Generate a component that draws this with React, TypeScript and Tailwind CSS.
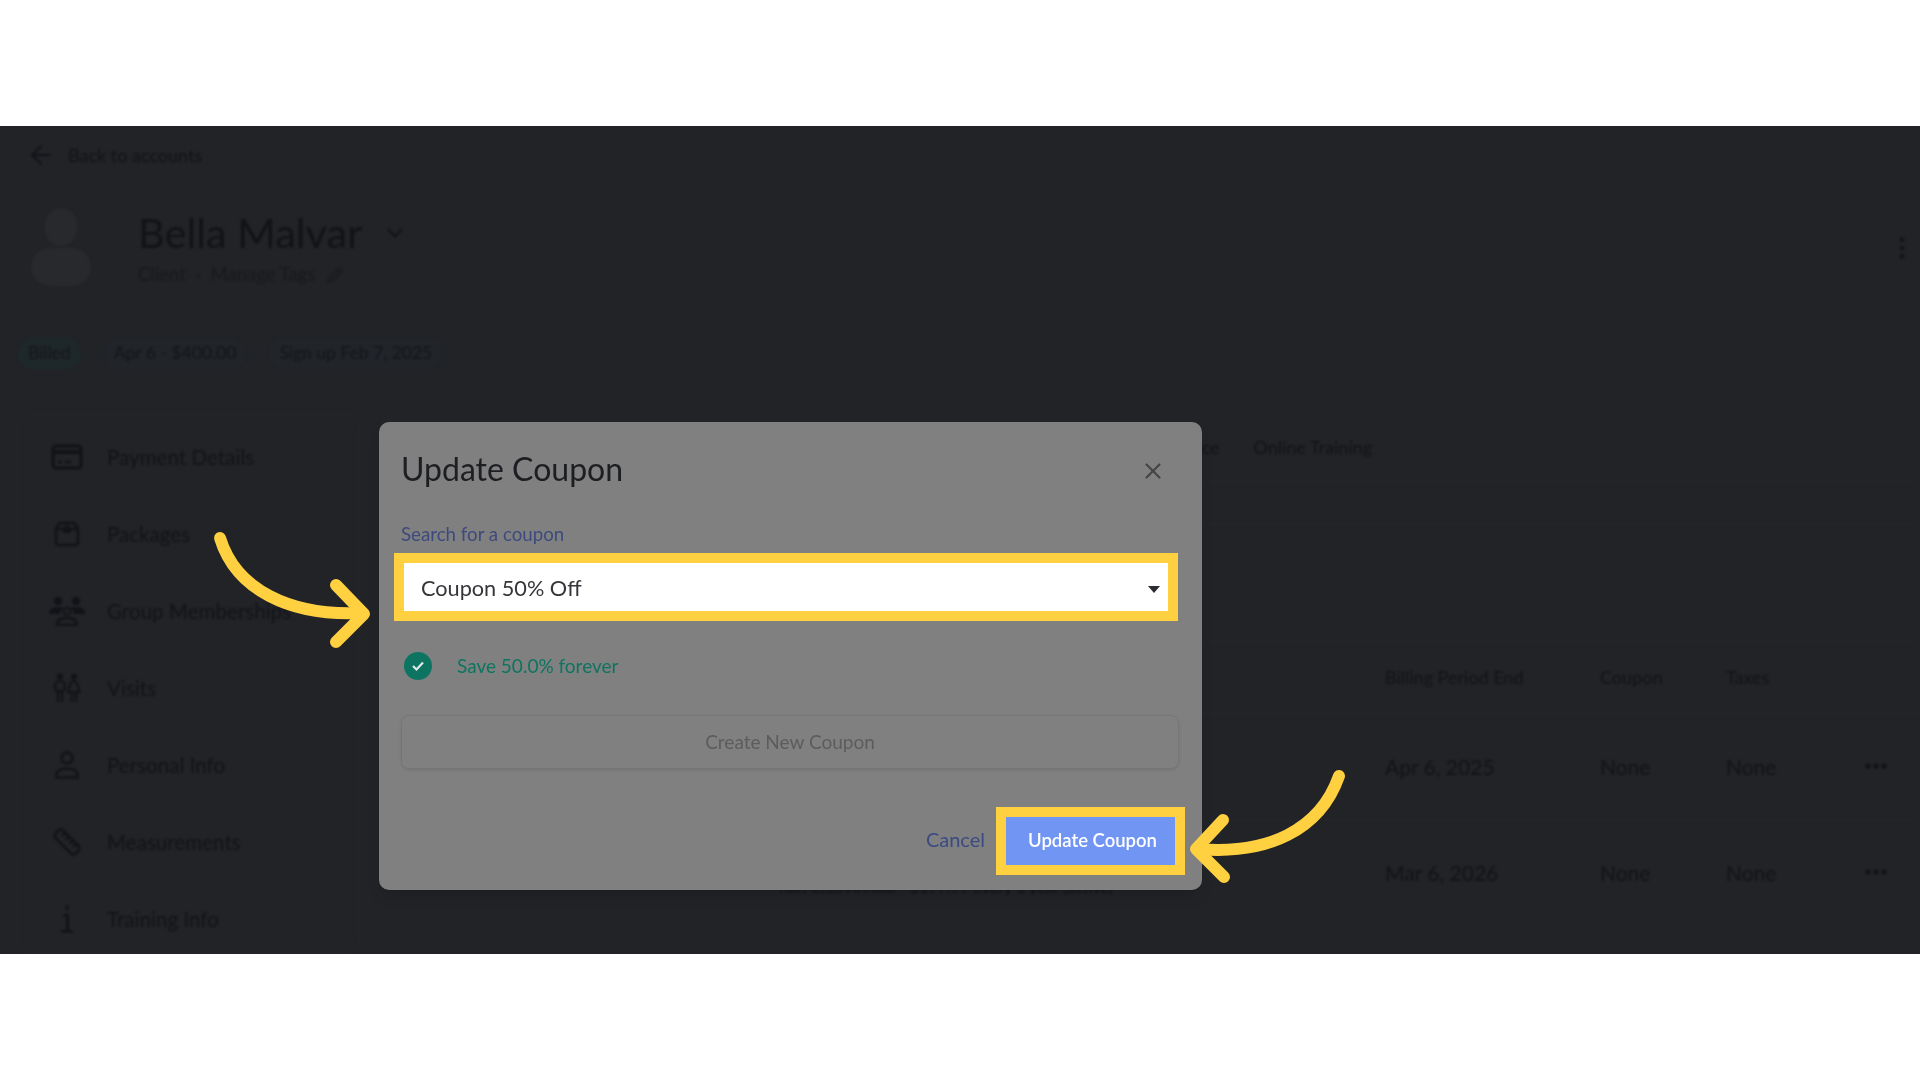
import { ArrowLeft, ChevronDown, Ellipsis, EllipsisVertical, Pencil, Ruler, X } from "lucide-react";

const PaymentIcon = () => (
  <svg width="32" height="26" viewBox="0 0 32 26" fill="none" stroke="#121317" strokeWidth="3">
    <rect x="2" y="2" width="28" height="22" rx="3" />
    <path d="M2 8h28" strokeWidth="4" />
    <path d="M7 18h4M14 18h6" strokeWidth="2.5" />
  </svg>
);

const PackageIcon = () => (
  <svg width="26" height="26" viewBox="0 0 26 26" fill="none" stroke="#121317" strokeWidth="2.5">
    <path d="M6 2h14l4 5v14a3 3 0 0 1-3 3H5a3 3 0 0 1-3-3V7z" />
    <path d="M2 8h22" />
    <path d="M9 8l4-5 4 5v4H9z" fill="#121317" stroke="none" />
  </svg>
);

const GroupIcon = () => (
  <svg width="36" height="30" viewBox="0 0 36 30" fill="#121317">
    <circle cx="9" cy="5" r="4" />
    <circle cx="27" cy="5" r="4" />
    <path d="M0 17c0-4 4-6 9-6 2 0 4 .5 5 1.400-2 1-3 3-3 5.600H0zM36 17c0-4-4-6-9-6-2 0-4 .5-5 1.400 2 1 3 3 3 5.600h11z" />
    <circle cx="18" cy="15" r="3.500" fill="none" stroke="#121317" strokeWidth="2" />
    <path d="M8 29c0-5 4-7 10-7s10 2 10 7z" fill="none" stroke="#121317" strokeWidth="2.500" />
  </svg>
);

const VisitsIcon = () => (
  <svg width="28" height="30" viewBox="0 0 28 30" fill="none" stroke="#121317" strokeWidth="2.200">
    <circle cx="7" cy="3.500" r="3" fill="#121317" stroke="none" />
    <circle cx="21" cy="3.500" r="3" fill="#121317" stroke="none" />
    <path d="M2 14c0-4 2-6 5-6s5 2 5 6-2 4-5 4-5 0-5-4zM5 18v11M9 18v11" />
    <path d="M21 8c2 0 3 2 3.500 4l2 7H15l2-7c.5-2 2-4 4-4zM19 19v10M23 19v10" />
  </svg>
);

const PersonIcon = () => (
  <svg width="24" height="28" viewBox="0 0 24 28" fill="none" stroke="#121317" strokeWidth="2.500">
    <circle cx="12" cy="7" r="5.500" />
    <path d="M1.500 26.500v-3c0-4 5-6 10.500-6s10.500 2 10.500 6v3z" />
  </svg>
);

const InfoIcon = () => (
  <svg width="14" height="28" viewBox="0 0 14 28" fill="#121317">
    <circle cx="7" cy="2.500" r="2" />
    <path d="M3 9h6v16h4v2.500H1V25h5V11.500H3z" />
  </svg>
);

const navItems = [
  { label: "Payment Details", icon: <PaymentIcon /> },
  { label: "Packages", icon: <PackageIcon /> },
  { label: "Group Memberships", icon: <GroupIcon /> },
  { label: "Visits", icon: <VisitsIcon /> },
  { label: "Personal Info", icon: <PersonIcon /> },
  { label: "Measurements", icon: <Ruler size={30} strokeWidth={2} color="#121317" /> },
  { label: "Training Info", icon: <InfoIcon /> },
];

const rows = [
  { end: "Apr 6, 2025", name: "" },
  { end: "Mar 6, 2026", name: "Run Club Annual - $177.77 every 1 year (active)" },
];

const Backdrop = () => (
  <div className="blur-[0.8px] h-full text-[#121317]">
    <div className="h-[58px] flex items-center pl-[26px] gap-[12px]">
      <ArrowLeft size={30} strokeWidth={1.75} />
      <span className="text-[18px]">Back to accounts</span>
    </div>

    <div className="h-[110px] flex items-center pl-[30px] pr-[4px] pt-[16px]">
      <div className="w-[62px] flex flex-col items-center">
        <div className="w-[32px] h-[38px] rounded-full bg-[#28292d]" />
        <div className="w-[60px] h-[38px] rounded-full bg-[#28292d] mt-[2px]" />
      </div>
      <div className="ml-[46px] mt-[2px]">
        <div className="flex items-center gap-[20px] h-[50px]">
          <span className="text-[41.500px] leading-none">Bella Malvar</span>
          <ChevronDown size={26} strokeWidth={2} />
        </div>
        <div className="flex items-center gap-[10px] text-[18.500px] text-[#18191d] mt-[3px]">
          <span>Client</span>
          <span>·</span>
          <span>Manage Tags</span>
          <Pencil size={16} className="ml-[2px]" />
        </div>
      </div>
      <EllipsisVertical size={28} className="ml-auto mt-[2px]" />
    </div>

    <div className="h-[120px] flex items-center pl-[17px] pb-[2px] gap-[22px] text-[17.500px] text-[#15161a]">
      <span className="h-[33px] px-[11px] flex items-center rounded-full bg-[#1e2729]">Billed</span>
      <span className="h-[33px] px-[10px] flex items-center rounded-full bg-[#212429]">Apr 6 - $400.00</span>
      <span className="h-[33px] px-[11px] flex items-center rounded-full bg-[#212429]">Sign up Feb 7, 2025</span>
    </div>

    <div className="flex pl-[18px]">
      <nav className="w-[342px] h-[539px] pt-[3.500px] rounded-[10px] border border-[#26272b]">
        {navItems.map((item) => (
          <div key={item.label} className="h-[77px] flex items-center text-[20.500px] tracking-[0.05px]">
            <div className="w-[88px] flex justify-center pl-[8px]">{item.icon}</div>
            <span>{item.label}</span>
          </div>
        ))}
      </nav>

      <div className="ml-[45px] flex-1">
        <div className="h-[66px] flex items-center justify-end gap-[34px] pr-[548px] text-[18px]">
          <span>Attendance</span>
          <span>Online Training</span>
        </div>
        <div className="h-[45px] border-y border-[#26272b]" />
        <div className="h-[115px]" />
        <div className="h-[74px] grid grid-cols-[980px_215px_126px_1fr] items-center border-y border-[#26272b] text-[18px]">
          <span />
          <span>Billing Period End</span>
          <span>Coupon</span>
          <span>Taxes</span>
        </div>
        {rows.map((row) => (
          <div
            key={row.end}
            className="h-[106px] grid grid-cols-[980px_215px_126px_126px_1fr] items-center border-b border-[#26272b] text-[21px]"
          >
            <span className="text-[16px] pl-[374px] pt-[28px] whitespace-nowrap">{row.name}</span>
            <span>{row.end}</span>
            <span>None</span>
            <span>None</span>
            <Ellipsis size={28} strokeWidth={2.500} className="ml-[10px] -mt-[2px]" />
          </div>
        ))}
      </div>
    </div>
  </div>
);

const CouponModal = () => (
  <div className="absolute left-[379px] top-[296px] w-[823px] h-[468px] rounded-[10px] bg-[#808080] pl-[22px] pr-[23px] shadow-lg">
    <div className="h-[93px] flex items-center justify-between">
      <h2 className="text-[32px] text-[#1d1e22] blur-[0.4px]">Update Coupon</h2>
      <X size={26} strokeWidth={2} color="#444548" className="mr-[13px] mt-[4px]" />
    </div>

    <label className="h-[38px] flex items-center text-[18.700px] text-[#3d4a7c] blur-[0.3px]">Search for a coupon</label>

    <div className="-ml-[7px] w-[784px] h-[68px] border-[10px] border-[#ffd040] bg-white flex items-center justify-between pl-[17px] pr-[8px] pt-[2px]">
      <span className="text-[21.700px] text-[#35363a]">Coupon 50% Off</span>
      <span className="w-0 h-0 border-x-[6px] border-x-transparent border-t-[7px] border-t-[#2b2c30] mt-[2px]" />
    </div>

    <div className="h-[90px] flex items-center gap-[25px] pl-[3px] blur-[0.3px]">
      <span className="w-[28px] h-[28px] rounded-full bg-[#0e7462] flex items-center justify-center">
        <svg width="14" height="12" viewBox="0 0 14 12" fill="none" stroke="#dfe9e6" strokeWidth="2.200">
          <path d="M2 6l3.500 3.500L12 2.500" />
        </svg>
      </span>
      <span className="text-[19px] text-[#0d7460]">Save 50.0% forever</span>
    </div>

    <div className="h-[54px] mt-[4px] rounded-[8px] border border-[#767676] shadow-sm flex items-center justify-center text-[19px] text-[#5c5c5e] blur-[0.3px]">
      Create New Coupon
    </div>

    <div className="flex items-center justify-end gap-[11px] -mr-[6px] mt-[38px]">
      <span className="text-[20px] text-[#3b4a82] blur-[0.3px] -mt-[4px]">Cancel</span>
      <div className="w-[189px] h-[68px] border-[10px] border-[#ffd040] bg-[#7195f2] flex items-center justify-center pl-[4px]">
        <span className="text-[18.500px] font-semibold text-white">Update Coupon</span>
      </div>
    </div>
  </div>
);

const LeftArrow = () => (
  <svg className="absolute left-[210px] top-[402px]" width="170" height="120" viewBox="210 528 170 120" fill="none" stroke="#ffd040" strokeWidth="12" strokeLinecap="round" strokeLinejoin="round">
    <path d="M220 538C236 590 290 616 360 613" />
    <path d="M336 585L364 614L336 642" />
  </svg>
);

const RightArrow = () => (
  <svg className="absolute left-[1185px] top-[640px]" width="165" height="120" viewBox="1185 766 165 120" fill="none" stroke="#ffd040" strokeWidth="12" strokeLinecap="round" strokeLinejoin="round">
    <path d="M1339 776C1320 830 1268 855 1198 849" />
    <path d="M1223 820L1196 849L1224 877" />
  </svg>
);

export default function App() {
  return (
    <div className="h-[1080px] bg-white flex flex-col overflow-hidden font-['Lato',sans-serif]">
      <div className="h-[126px]" />
      <div className="h-[828px] relative bg-[#222327] overflow-hidden">
        <Backdrop />
        <CouponModal />
        <LeftArrow />
        <RightArrow />
      </div>
      <div className="h-[126px]" />
    </div>
  );
}
